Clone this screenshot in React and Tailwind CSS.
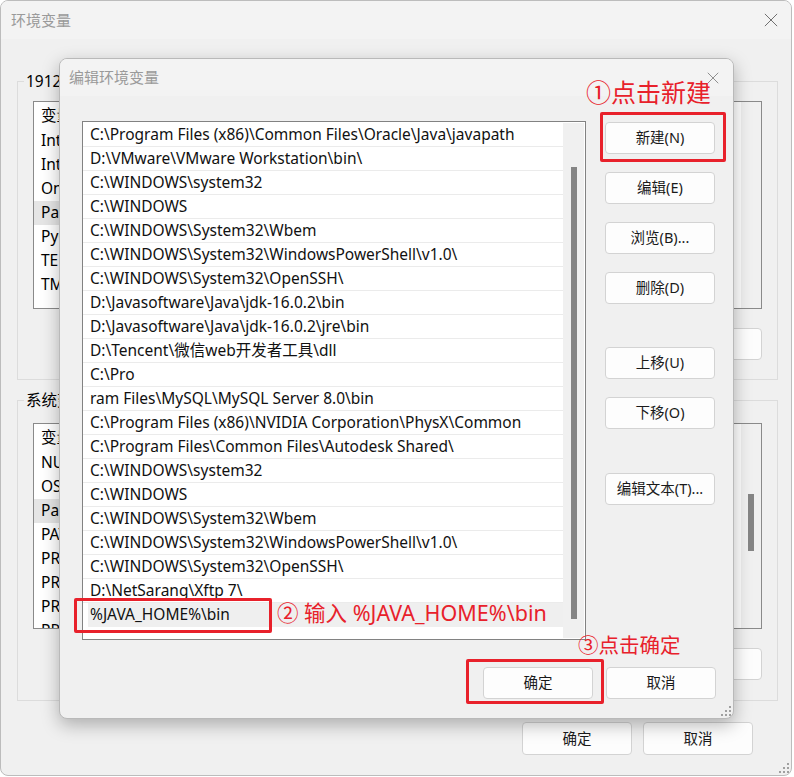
import React from 'react';

const FONT = "font-['Noto_Sans','Noto_Sans_CJK_SC',sans-serif]";

const paths = [
  'C:\\Program Files (x86)\\Common Files\\Oracle\\Java\\javapath',
  'D:\\VMware\\VMware Workstation\\bin\\',
  'C:\\WINDOWS\\system32',
  'C:\\WINDOWS',
  'C:\\WINDOWS\\System32\\Wbem',
  'C:\\WINDOWS\\System32\\WindowsPowerShell\\v1.0\\',
  'C:\\WINDOWS\\System32\\OpenSSH\\',
  'D:\\Javasoftware\\Java\\jdk-16.0.2\\bin',
  'D:\\Javasoftware\\Java\\jdk-16.0.2\\jre\\bin',
  'D:\\Tencent\\微信web开发者工具\\dll',
  'C:\\Pro',
  'ram Files\\MySQL\\MySQL Server 8.0\\bin',
  'C:\\Program Files (x86)\\NVIDIA Corporation\\PhysX\\Common',
  'C:\\Program Files\\Common Files\\Autodesk Shared\\',
  'C:\\WINDOWS\\system32',
  'C:\\WINDOWS',
  'C:\\WINDOWS\\System32\\Wbem',
  'C:\\WINDOWS\\System32\\WindowsPowerShell\\v1.0\\',
  'C:\\WINDOWS\\System32\\OpenSSH\\',
  'D:\\NetSarang\\Xftp 7\\',
];

const userVars = ['IntelliJ IDEA', 'IntelliJ IDEA Community Edition', 'OneDrive', 'Path', 'PyCharm', 'TEMP', 'TMP'];
const sysVars = ['NUMBER_OF_PROCESSORS', 'OS', 'Path', 'PATHEXT', 'PROCESSOR_ARCHITECTURE', 'PROCESSOR_IDENTIFIER', 'PROCESSOR_LEVEL', 'PROCESSOR_REVISION'];

const Btn = ({ children, className = '' }) => (
  <div className={`w-[110px] h-[32px] flex items-center justify-center bg-[#fdfdfd] border border-[#d3d3d3] rounded-[4px] text-[14.5px] text-[#1a1a1a] ${className}`}>
    {children}
  </div>
);

const CloseX = ({ size, color }) => (
  <svg width={size} height={size} viewBox="0 0 16 16">
    <path d="M1 1L15 15M15 1L1 15" stroke={color} strokeWidth="1.1" />
  </svg>
);

const Grip = () => (
  <svg width="10" height="10" viewBox="0 0 10 10">
    <rect x="8" y="0" width="2" height="2" fill="#a0a0a0" />
    <rect x="4" y="4" width="2" height="2" fill="#a0a0a0" />
    <rect x="8" y="4" width="2" height="2" fill="#a0a0a0" />
    <rect x="0" y="8" width="2" height="2" fill="#a0a0a0" />
    <rect x="4" y="8" width="2" height="2" fill="#a0a0a0" />
    <rect x="8" y="8" width="2" height="2" fill="#a0a0a0" />
  </svg>
);

const VarList = ({ items, selected, height, scroll }) => (
  <div className={`relative bg-white border border-[#8a8a8a] flex overflow-hidden ${height}`}>
    <div className="flex-1 flex flex-col">
      <div className="h-[27px] shrink-0 flex items-center pl-[7px] text-[15.5px] text-black">变量</div>
      {items.map((v, i) => (
        <div
          key={i}
          className={`h-[24px] shrink-0 flex items-center pl-[7px] text-[15.5px] text-black ${i === selected ? 'bg-[#e5e5e5] mr-[21px]' : ''}`}
        >
          {v}
        </div>
      ))}
    </div>
    <div className="w-[20px] bg-[#f0f0f0] flex justify-center pt-[70px]">
      {scroll && <div className="w-[6px] h-[57px] bg-[#858585]" />}
    </div>
  </div>
);

const BgWindow = () => (
  <div className={`absolute left-0 top-0 w-[792px] h-[776px] rounded-[8px] border border-[#bcbcbc] bg-[#f0f0f0] overflow-hidden flex flex-col ${FONT}`}>
    <div className="h-[38px] shrink-0 flex items-center justify-between pl-[10px] pr-[13px] bg-[#f3f3f3]">
      <span className="text-[15px] text-[#9a9a9a]">环境变量</span>
      <CloseX size={14} color="#6a6a6a" />
    </div>
    <div className="flex flex-col pl-[16px] pr-[13px]">
      <fieldset className="mt-[32px] w-[761px] border border-[#dcdcdc] px-[15px] pb-[19px]">
        <legend className="-ml-[9px] px-[2px] text-[15.5px] leading-[20px] text-black">19124 的用户变量(U)</legend>
        <div className="mt-[10px]">
          <VarList items={userVars} selected={3} height="h-[208px]" />
        </div>
        <div className="mt-[19px] flex justify-end gap-[10px]">
          <Btn>新建(N)...</Btn>
          <Btn>编辑(E)...</Btn>
          <Btn>删除(D)</Btn>
        </div>
      </fieldset>
      <fieldset className="mt-[10px] w-[761px] border border-[#dcdcdc] px-[15px] pb-[20px]">
        <legend className="-ml-[9px] px-[2px] text-[15.5px] leading-[20px] text-black">系统变量(S)</legend>
        <div className="mt-[13px]">
          <VarList items={sysVars} selected={2} height="h-[206px]" scroll />
        </div>
        <div className="mt-[19px] flex justify-end gap-[10px]">
          <Btn>新建(W)...</Btn>
          <Btn>编辑(I)...</Btn>
          <Btn>删除(L)</Btn>
        </div>
      </fieldset>
      <div className="mt-[21px] flex justify-end gap-[11px] pr-[25px]">
        <Btn className="h-[33px]">确定</Btn>
        <Btn className="h-[33px]">取消</Btn>
      </div>
    </div>
    <div className="absolute right-[2px] bottom-[2px]">
      <Grip />
    </div>
  </div>
);

const EditDialog = () => (
  <div className={`absolute left-[59px] top-[58px] w-[675px] h-[661px] rounded-[8px] border border-[#b9b9b9] bg-[#f0f0f0] shadow-[0_6px_18px_rgba(0,0,0,0.28)] overflow-hidden flex flex-col ${FONT}`}>
    <div className="h-[37px] shrink-0 flex items-center justify-between pl-[9px] pr-[14px] bg-[#f3f3f3]">
      <span className="text-[15px] text-[#9a9a9a]">编辑环境变量</span>
      <CloseX size={12} color="#7a7a7a" />
    </div>
    <div className="flex pl-[22px] pt-[25px]">
      <div className="w-[504px] h-[519px] bg-white border border-[#828282] flex">
        <div className="flex-1 flex flex-col pt-[1px] overflow-hidden">
          {paths.map((p, i) => (
            <div
              key={i}
              className="h-[24px] shrink-0 flex items-center pl-[7px] border-b border-[#ebebeb] text-[15.5px] text-[#111] whitespace-nowrap"
            >
              {p}
            </div>
          ))}
          <div className="h-[24px] shrink-0 flex items-center pl-[5px]">
            <div className="h-[24px] flex-1 flex items-center pl-[2px] bg-[#efefef] text-[15.5px] text-[#111]">
              %JAVA_HOME%\bin
            </div>
          </div>
        </div>
        <div className="w-[21px] bg-[#f0f0f0] flex justify-center pt-[44px] mt-[1px] mb-[1px] mr-[1px]">
          <div className="w-[6px] h-[452px] bg-[#858585]" />
        </div>
      </div>
      <div className="ml-[19px] pt-[1px] flex flex-col">
        <Btn>新建(N)</Btn>
        <Btn className="mt-[18px]">编辑(E)</Btn>
        <Btn className="mt-[18px]">浏览(B)...</Btn>
        <Btn className="mt-[18px]">删除(D)</Btn>
        <Btn className="mt-[43px]">上移(U)</Btn>
        <Btn className="mt-[18px]">下移(O)</Btn>
        <Btn className="mt-[44px]">编辑文本(T)...</Btn>
      </div>
    </div>
    <div className="flex justify-end gap-[13px] pr-[17px] mt-[27px]">
      <Btn>确定</Btn>
      <Btn>取消</Btn>
    </div>
    <div className="absolute right-[2px] bottom-[2px]">
      <Grip />
    </div>
  </div>
);

export default function App() {
  return (
    <div className="relative w-[794px] h-[777px] bg-white overflow-hidden">
      <BgWindow />
      <EditDialog />

      {/* annotations */}
      <div className={`absolute left-[586px] top-[76px] text-[25px] leading-[32px] text-[#e8212b] ${FONT}`}>①点击新建</div>
      <div className="absolute left-[600px] top-[112px] w-[126px] h-[50px] border-[3px] border-[#e8212b] rounded-[2px]" />

      <div className="absolute left-[74px] top-[598px] w-[198px] h-[35px] border-[3px] border-[#e8212b] rounded-[2px]" />
      <div className={`absolute left-[277px] top-[598px] text-[21.5px] leading-[30px] text-[#e8212b] ${FONT}`}>② 输入 %JAVA_HOME%\bin</div>

      <div className={`absolute left-[578px] top-[631px] text-[20.5px] leading-[28px] text-[#e8212b] ${FONT}`}>③点击确定</div>
      <div className="absolute left-[466px] top-[659px] w-[138px] h-[45px] border-[3px] border-[#e8212b] rounded-[2px]" />
    </div>
  );
}
